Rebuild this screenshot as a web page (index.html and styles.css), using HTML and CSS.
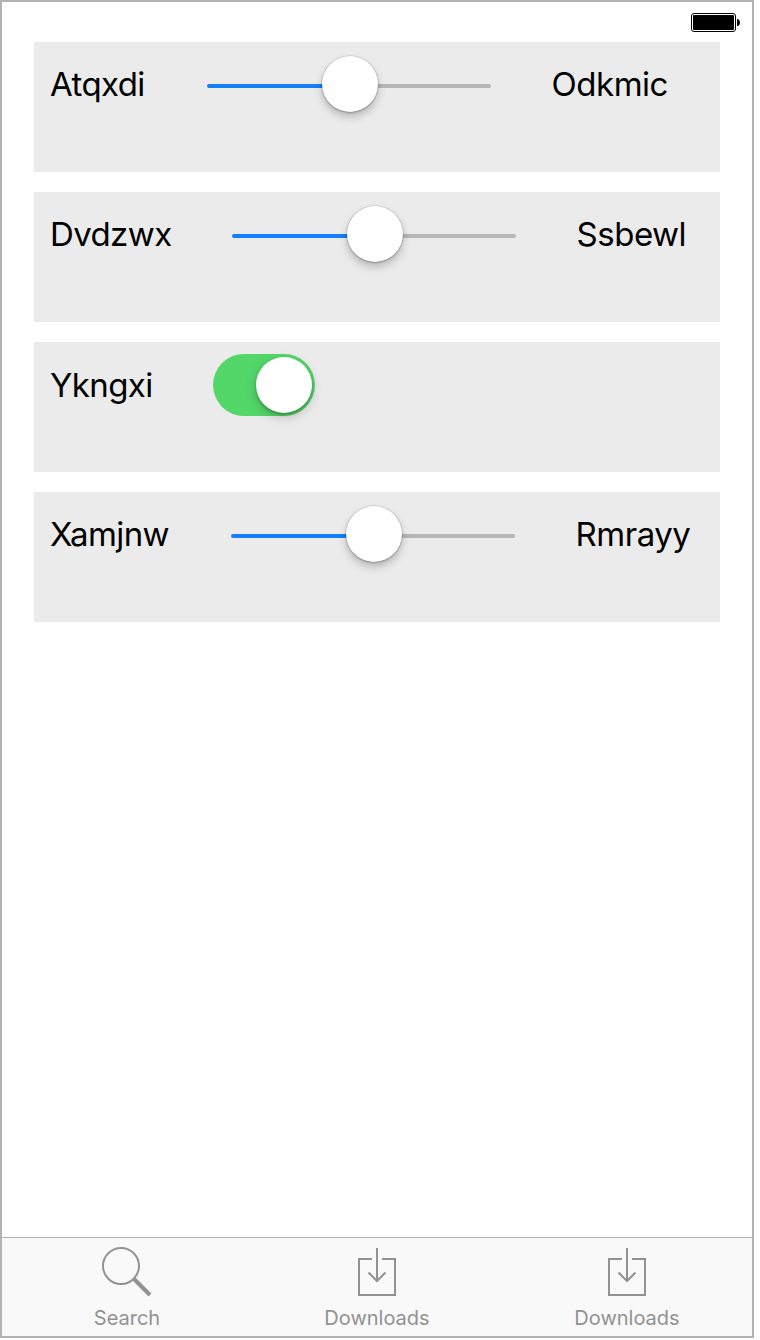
FILE: index.html
```html
<!DOCTYPE html>
<html lang="en">
<head>
<meta charset="utf-8">
<title>Settings</title>
<link rel="stylesheet" href="styles.css">
</head>
<body>
<div class="screen">
  <header class="status">
    <svg class="battery" width="50" height="20" viewBox="0 0 50 20">
      <rect x="0.5" y="0.5" width="44" height="18" rx="2.5" fill="none" stroke="#000"/>
      <rect x="2" y="2" width="41" height="15" rx="1"/>
      <path d="M46 6h1q2 1 2 3.5t-2 3.500h-1z"/>
    </svg>
  </header>
  <main class="cells">
    <section class="cell">
      <span class="label" style="width:97px">Atqxdi</span>
      <div class="slider"><span class="knob"></span></div>
      <span class="label value">Odkmic</span>
    </section>
    <section class="cell">
      <span class="label" style="width:122px">Dvdzwx</span>
      <div class="slider"><span class="knob"></span></div>
      <span class="label value">Ssbewl</span>
    </section>
    <section class="cell toggle">
      <span class="label" style="width:103px">Ykngxi</span>
      <div class="switch"><span class="knob"></span></div>
    </section>
    <section class="cell">
      <span class="label" style="width:121px">Xamjnw</span>
      <div class="slider"><span class="knob"></span></div>
      <span class="label value">Rmrayy</span>
    </section>
  </main>
  <nav class="tabs">
    <div class="tab search">
      <svg width="60" height="60" viewBox="0 0 60 60">
        <circle cx="24" cy="28" r="18" stroke-width="2"/>
        <path d="M37 41L53 57" stroke-width="4"/>
      </svg>
      <span>Search</span>
    </div>
    <div class="tab">
      <svg width="60" height="60" viewBox="0 0 60 60">
        <path d="M25 21H12V57H48V21H35M30 10V43M21.500 34.500L30 43L38.500 34.500" stroke-width="2"/>
      </svg>
      <span>Downloads</span>
    </div>
    <div class="tab">
      <svg width="60" height="60" viewBox="0 0 60 60">
        <path d="M25 21H12V57H48V21H35M30 10V43M21.500 34.500L30 43L38.500 34.500" stroke-width="2"/>
      </svg>
      <span>Downloads</span>
    </div>
  </nav>
</div>
</body>
</html>
```
FILE: styles.css
```css
* { box-sizing: border-box; }
body { margin: 0; background: #fff; font-family: Inter, "Liberation Sans", sans-serif; }
.screen {
  width: 754px;
  height: 1338px;
  border: 2px solid #b3b3b3;
  display: flex;
  flex-direction: column;
}
.status {
  height: 40px;
  padding: 11px 11px 0 0;
  display: flex;
  justify-content: flex-end;
}
.cells {
  flex: 1;
  padding: 0 32px;
  display: flex;
  flex-direction: column;
  gap: 20px;
}
.cell {
  height: 130px;
  padding: 12px 16px 0;
  background: #ebebeb;
  display: flex;
  align-items: flex-start;
  gap: 60px;
}
.label {
  flex: none;
  font-size: 33px;
  line-height: 60px;
  letter-spacing: -0.6px;
  white-space: nowrap;
  color: #000;
}
.value { padding-left: 0.6px; letter-spacing: -0.5px; }
.toggle .label { padding-top: 1px; }
.slider {
  flex: none;
  width: 284px;
  height: 4px;
  margin-top: 30px;
  padding-left: 2px;
  border-radius: 2px;
  background: linear-gradient(90deg, #157efb 50%, #b6b6b6 50%);
  display: flex;
  align-items: center;
  justify-content: center;
}
.knob {
  flex: none;
  width: 56px;
  height: 56px;
  border-radius: 50%;
  background: #fff;
}
.slider .knob {
  margin-top: -5px;
  box-shadow: 0 0 1px 0.5px rgba(0,0,0,.16), 0 5px 9px rgba(0,0,0,.22), 0 1px 2px rgba(0,0,0,.2);
}
.switch {
  width: 102px;
  height: 62px;
  border-radius: 31px;
  padding: 3px;
  background: #53d769;
  display: flex;
  justify-content: flex-end;
}
.switch .knob { box-shadow: 0 4px 12px rgba(0,0,0,.2), 0 2px 3px rgba(0,0,0,.22); }
.tabs {
  height: 99px;
  border-top: 1px solid #b2b2b2;
  background: #f9f9f9;
  display: flex;
}
.tab {
  flex: 1;
  display: flex;
  flex-direction: column;
  align-items: center;
  color: #929292;
  font-size: 20px;
  line-height: 24px;
}
.tab svg { fill: none; stroke: #929292; margin-bottom: 8px; }
```
